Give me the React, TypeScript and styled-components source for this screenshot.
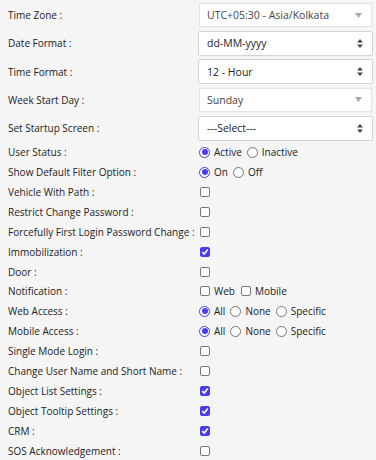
import { Fragment } from "react";
import styled, { createGlobalStyle } from "styled-components";

const GlobalStyle = createGlobalStyle`
	body {
		margin: 0;
		background: #f5f5f5;
		font-family: "Open Sans", "Liberation Sans", sans-serif;
		color: #222;
	}
`;

const Form = styled.div`
	display: grid;
	grid-template-columns: 191px 1fr;
	padding: 1px 4px 0 8px;
`;

const Label = styled.div<{ $tall?: boolean }>`
	display: flex;
	align-items: center;
	height: ${({ $tall }) => ($tall ? "28.25px" : "19.9px")};
	font-size: 10px;
	white-space: nowrap;
`;

const Field = styled.div<{ $tall?: boolean }>`
	display: flex;
	align-items: center;
	gap: 4px;
	height: ${({ $tall }) => ($tall ? "28.25px" : "19.9px")};
	font-size: 10px;
`;

const SelectBox = styled.div<{ $native?: boolean }>`
	display: flex;
	align-items: center;
	justify-content: space-between;
	box-sizing: border-box;
	width: ${({ $native }) => ($native ? "175px" : "173px")};
	margin-left: ${({ $native }) => ($native ? "-1px" : "0")};
	height: ${({ $native }) => ($native ? "25px" : "24px")};
	padding: 0 9px 0 ${({ $native }) => ($native ? "8px" : "7px")};
	background: #fff;
	border: 1px solid ${({ $native }) => ($native ? "#d4d4d4" : "#e2e2e2")};
	border-radius: ${({ $native }) => ($native ? "2px" : "0")};
	font-size: 10.5px;
	color: ${({ $native }) => ($native ? "#222" : "#444")};
`;

const Option = styled.label`
	display: inline-flex;
	align-items: center;
	gap: 4px;
	margin-right: 1px;
`;

const Radio = styled.span<{ $on?: boolean }>`
	box-sizing: border-box;
	width: 11px;
	height: 11px;
	border-radius: 50%;
	border: 1px solid ${({ $on }) => ($on ? "#4a3df0" : "#767676")};
	background: #fff;
	display: inline-flex;
	align-items: center;
	justify-content: center;
	&::after {
		content: "";
		width: 6px;
		height: 6px;
		border-radius: 50%;
		background: ${({ $on }) => ($on ? "#4a3df0" : "transparent")};
	}
`;

const Box = styled.span<{ $on?: boolean }>`
	box-sizing: border-box;
	width: 10px;
	height: 10px;
	border-radius: 2px;
	border: 1px solid ${({ $on }) => ($on ? "#4a3df0" : "#767676")};
	background: ${({ $on }) => ($on ? "#4a3df0" : "#fff")};
	display: inline-flex;
	align-items: center;
	justify-content: center;
	margin-left: 1px;
`;

const Arrow = () => (
	<svg width="7" height="5" viewBox="0 0 7 5">
		<path d="M0 0H7L3.5 5Z" fill="#aaa" />
	</svg>
);

const UpDown = () => (
	<svg width="6" height="9" viewBox="0 0 6 9">
		<path d="M0 3.5L3 0L6 3.5ZM0 5.5L3 9L6 5.5Z" fill="#444" />
	</svg>
);

const Check = ({ on }: { on?: boolean }) => (
	<Box $on={on}>
		{on && (
			<svg width="8" height="8" viewBox="0 0 8 8">
				<path d="M1.3 4.2L3.2 6L6.8 1.6" stroke="#fff" strokeWidth="1.6" fill="none" />
			</svg>
		)}
	</Box>
);

type Row =
	| { label: string; select: string; native?: boolean }
	| { label: string; radios: string[] }
	| { label: string; check: boolean }
	| { label: string; checks: string[] };

const rows: Row[] = [
	{ label: "Time Zone :", select: "UTC+05:30 - Asia/Kolkata" },
	{ label: "Date Format :", select: "dd-MM-yyyy", native: true },
	{ label: "Time Format :", select: "12 - Hour", native: true },
	{ label: "Week Start Day :", select: "Sunday" },
	{ label: "Set Startup Screen :", select: "---Select---", native: true },
	{ label: "User Status :", radios: ["Active", "Inactive"] },
	{ label: "Show Default Filter Option :", radios: ["On", "Off"] },
	{ label: "Vehicle With Path :", check: false },
	{ label: "Restrict Change Password :", check: false },
	{ label: "Forcefully First Login Password Change :", check: false },
	{ label: "Immobilization :", check: true },
	{ label: "Door :", check: false },
	{ label: "Notification :", checks: ["Web", "Mobile"] },
	{ label: "Web Access :", radios: ["All", "None", "Specific"] },
	{ label: "Mobile Access :", radios: ["All", "None", "Specific"] },
	{ label: "Single Mode Login :", check: false },
	{ label: "Change User Name and Short Name :", check: false },
	{ label: "Object List Settings :", check: true },
	{ label: "Object Tooltip Settings :", check: true },
	{ label: "CRM :", check: true },
	{ label: "SOS Acknowledgement :", check: false },
];

const renderField = (row: Row) => {
	if ("select" in row) {
		return (
			<SelectBox $native={row.native}>
				<span>{row.select}</span>
				{row.native ? <UpDown /> : <Arrow />}
			</SelectBox>
		);
	}
	if ("radios" in row) {
		return row.radios.map((r, i) => (
			<Option key={r}>
				<Radio $on={i === 0} />
				{r}
			</Option>
		));
	}
	if ("checks" in row) {
		return row.checks.map((c) => (
			<Option key={c}>
				<Check />
				{c}
			</Option>
		));
	}
	return <Check on={row.check} />;
};

export default function App() {
	return (
		<>
			<GlobalStyle />
			<Form>
				{rows.map((row) => {
					const tall = "select" in row;
					return (
						<Fragment key={row.label}>
							<Label $tall={tall}>{row.label}</Label>
							<Field $tall={tall}>{renderField(row)}</Field>
						</Fragment>
					);
				})}
			</Form>
		</>
	);
}
